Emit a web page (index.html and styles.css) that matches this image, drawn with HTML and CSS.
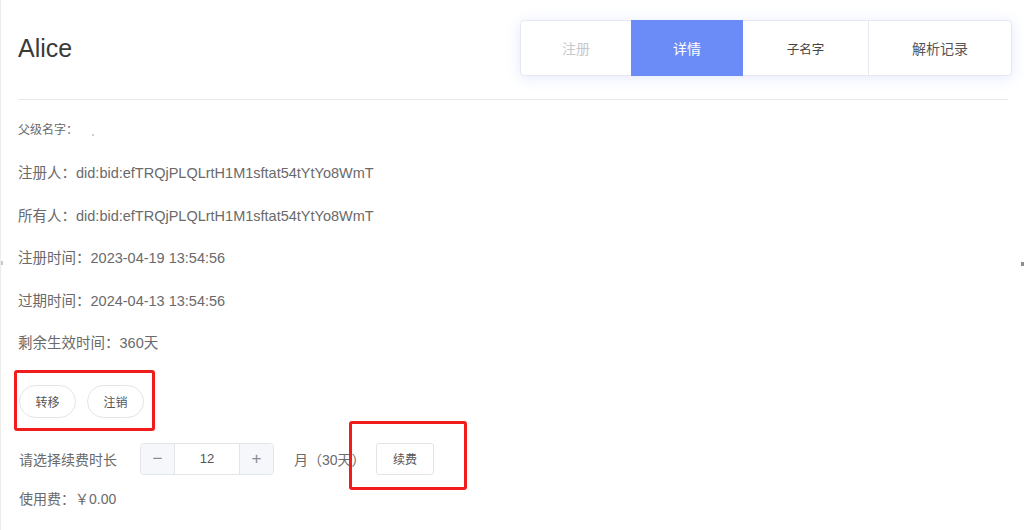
FILE: index.html
```html
<!DOCTYPE html>
<html lang="zh-CN">
<head>
<meta charset="utf-8">
<title>Alice</title>
<link rel="stylesheet" href="styles.css">
</head>
<body>
<div class="page">
  <div class="header">
    <h1 class="title">Alice</h1>
    <div class="tabs">
      <div class="tab tab-disabled tab-1">注册</div>
      <div class="tab tab-active tab-2">详情</div>
      <div class="tab tab-3 tab-small">子名字</div>
      <div class="tab tab-4">解析记录</div>
    </div>
  </div>

  <div class="info">
    <div class="row row-first">父级名字：<span class="dot"></span></div>
    <div class="row">注册人：did:bid:efTRQjPLQLrtH1M1sftat54tYtYo8WmT</div>
    <div class="row">所有人：did:bid:efTRQjPLQLrtH1M1sftat54tYtYo8WmT</div>
    <div class="row">注册时间：2023-04-19 13:54:56</div>
    <div class="row">过期时间：2024-04-13 13:54:56</div>
    <div class="row">剩余生效时间：360天</div>
  </div>

  <div class="actions">
    <button class="pill">转移</button>
    <button class="pill">注销</button>
  </div>

  <div class="renew">
    <span class="renew-label">请选择续费时长</span>
    <div class="stepper">
      <span class="step step-minus">−</span>
      <span class="step-value">12</span>
      <span class="step step-plus">+</span>
    </div>
    <span class="unit">月（30天）</span>
    <button class="renew-btn">续费</button>
  </div>

  <div class="fee">使用费：￥0.00</div>

  <div class="mark mark-1"></div>
  <div class="mark mark-2"></div>
  <div class="speck speck-left"></div>
  <div class="speck speck-right"></div>
</div>
</body>
</html>
```

FILE: styles.css
```css
* { box-sizing: border-box; }

html, body {
  margin: 0;
  padding: 0;
  background: #ffffff;
}

body {
  font-family: "Liberation Sans", "Noto Sans CJK SC", sans-serif;
  color: #666666;
  width: 1026px;
  height: 530px;
  overflow: hidden;
}

.page {
  position: relative;
  height: 530px;
  padding: 0 18px 0 17px;
  border-left: 1px solid #ececec;
}

.header {
  display: flex;
  justify-content: space-between;
  align-items: flex-start;
  height: 100px;
  padding-top: 20px;
  border-bottom: 1px solid #e9e9e9;
}

.title {
  margin: 0;
  font-weight: normal;
  font-size: 25px;
  line-height: 56px;
  color: #3a3a3a;
}

.tabs {
  display: flex;
  height: 56px;
  margin-right: -4px;
  border: 1px solid #e6e9f0;
  border-radius: 4px;
  background: #ffffff;
  box-shadow: 0 2px 14px rgba(95, 125, 240, 0.16);
}

.tab {
  display: flex;
  align-items: center;
  justify-content: center;
  font-size: 14px;
  color: #555555;
  font-family: "Noto Sans CJK SC", sans-serif;
}

.tab-1 { width: 110px; }
.tab-2 { width: 112px; }
.tab-3 { width: 126px; border-right: 1px solid #e6e9f0; }
.tab-4 { width: 142px; }

.tab-small { font-size: 12.5px; color: #444444; }
.tab-disabled { color: #c6c8cc; }
.tab-active {
  background: #6b8cf7;
  color: #ffffff;
  margin: -1px 0;
}

.info {
  padding-top: 9px;
}

.row {
  height: 42.5px;
  line-height: 42.5px;
  font-size: 14.5px;
  color: #6a6a6a;
  white-space: nowrap;
}

.row-first {
  height: 43px;
  line-height: 43px;
  font-size: 12px;
}

.dot {
  display: inline-block;
  width: 2px;
  height: 2px;
  margin-left: 14px;
  background: #cfcfcf;
  vertical-align: middle;
  position: relative;
  top: 4px;
}

.actions {
  display: flex;
  gap: 11px;
  margin-top: 20px;
  padding-left: 1px;
}

.pill {
  width: 57px;
  height: 33px;
  border: 1px solid #e2e4e9;
  border-radius: 17px;
  background: #ffffff;
  font-family: "Noto Sans CJK SC", sans-serif;
  font-size: 12px;
  color: #555555;
  padding: 0;
}

.renew {
  display: flex;
  align-items: center;
  margin-top: 25px;
  height: 32px;
}

.renew-label {
  font-size: 14px;
  color: #6a6a6a;
  width: 122px;
  padding-left: 1px;
}

.stepper {
  display: flex;
  width: 134px;
  height: 32px;
  border: 1px solid #e2e5ea;
  border-radius: 4px;
  overflow: hidden;
}

.step {
  width: 34px;
  display: flex;
  align-items: center;
  justify-content: center;
  background: #f5f7fa;
  color: #8a8d93;
  font-size: 17px;
}

.step-minus { border-right: 1px solid #e2e5ea; }
.step-plus { border-left: 1px solid #e2e5ea; }

.step-value {
  flex: 1;
  display: flex;
  align-items: center;
  justify-content: center;
  font-size: 13px;
  color: #555555;
}

.unit {
  margin-left: 20px;
  font-size: 14px;
  color: #6a6a6a;
  width: 82px;
}

.renew-btn {
  width: 58px;
  height: 32px;
  border: 1px solid #e2e4e9;
  border-radius: 3px;
  background: #ffffff;
  font-family: "Noto Sans CJK SC", sans-serif;
  font-size: 12px;
  color: #555555;
  padding: 0;
}

.fee {
  margin-top: 12px;
  line-height: 24px;
  font-size: 14px;
  color: #6a6a6a;
  padding-left: 1px;
}

.mark {
  position: absolute;
  border: 3px solid #f11d1d;
  border-radius: 3px;
}

.mark-1 {
  left: 13px;
  top: 370px;
  width: 141px;
  height: 61px;
}

.mark-2 {
  left: 348px;
  top: 421px;
  width: 118px;
  height: 69px;
}

.speck {
  position: absolute;
  width: 3px;
  height: 4px;
  background: #8d8d8d;
}

.speck-left { left: 0; top: 261px; background: #c8c8c8; width: 2px; }
.speck-right { left: 1020px; top: 262px; }
```
